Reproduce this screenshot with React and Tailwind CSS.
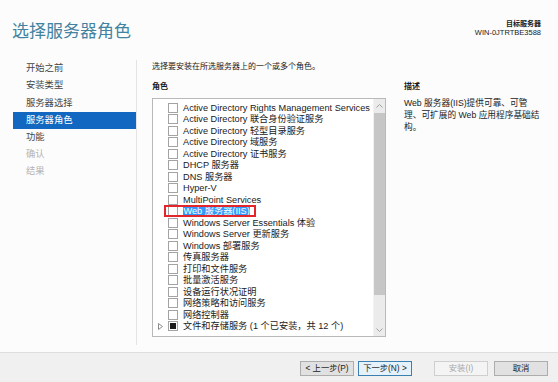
import React from 'react';

const navItems = [
    { label: '开始之前', state: 'done' },
    { label: '安装类型', state: 'done' },
    { label: '服务器选择', state: 'done' },
    { label: '服务器角色', state: 'active' },
    { label: '功能', state: 'done' },
    { label: '确认', state: 'disabled' },
    { label: '结果', state: 'disabled' },
];

const roles = [
    'Active Directory Rights Management Services',
    'Active Directory 联合身份验证服务',
    'Active Directory 轻型目录服务',
    'Active Directory 域服务',
    'Active Directory 证书服务',
    'DHCP 服务器',
    'DNS 服务器',
    'Hyper-V',
    'MultiPoint Services',
    'Web 服务器(IIS)',
    'Windows Server Essentials 体验',
    'Windows Server 更新服务',
    'Windows 部署服务',
    '传真服务器',
    '打印和文件服务',
    '批量激活服务',
    '设备运行状况证明',
    '网络策略和访问服务',
    '网络控制器',
    '文件和存储服务 (1 个已安装，共 12 个)',
];

const Checkbox = ({ partial }) => (
    <div className="w-[10px] h-[10px] border border-[#a3a3a3] bg-white flex items-center justify-center shrink-0">
        {partial && <div className="w-[6px] h-[6px] bg-[#1a1a1a]" />}
    </div>
);

const RoleRow = ({ label, index }) => {
    const isWeb = index === 9;
    const isLast = index === roles.length - 1;
    return (
        <div className="relative flex items-center h-[11.5px] whitespace-nowrap">
            <div className="w-[15px] flex justify-center shrink-0">
                {isLast && (
                    <svg width="5" height="7" viewBox="0 0 5 7">
                        <path d="M0.5 0.5 L4.5 3.5 L0.5 6.5 Z" fill="none" stroke="#8a8a8a" strokeWidth="1" />
                    </svg>
                )}
            </div>
            <Checkbox partial={isLast} />
            <span className={`ml-[5px] text-[9.2px] leading-[10px] ${isWeb ? 'bg-[#3399ff] text-white px-[0.5px]' : 'text-[#1a1a1a]'}`}>
                {label}
            </span>
            {isWeb && (
                <div className="absolute left-[11px] top-[-0.5px] w-[92px] h-[12.5px] border-2 border-[#e3262b]" />
            )}
        </div>
    );
};

const Button = ({ children, variant }) => {
    const styles = {
        normal: 'border-[#adadad] bg-[#e1e1e1] text-[#1a1a1a]',
        focus: 'border-[#3c7fb1] bg-[#e5f1fb] text-[#1a1a1a]',
        disabled: 'border-[#cfcfcf] bg-[#f4f4f4] text-[#a8a8a8]',
    };
    return (
        <button className={`w-[54px] h-[15px] border text-[8.3px] leading-[13px] flex items-center justify-center ${styles[variant]}`}>
            {children}
        </button>
    );
};

export default function App() {
    return (
        <div className="w-[558px] h-[382px] bg-[#fcfcfc] flex flex-col overflow-hidden font-['Liberation_Sans','Noto_Sans_CJK_SC',sans-serif]">
            {/* Header */}
            <div className="h-[58px] flex justify-between items-start shrink-0">
                <h1 className="pl-[12px] pt-[21px] text-[17px] leading-[22px] text-[#4183a0] font-normal">
                    选择服务器角色
                </h1>
                <div className="pr-[17px] pt-[19px] text-right text-[#1a1a1a]">
                    <div className="text-[7px] leading-[9.3px] font-bold">目标服务器</div>
                    <div className="text-[7.5px] leading-[9.3px]">WIN-0JTRTBE3588</div>
                </div>
            </div>

            {/* Body */}
            <div className="flex-1 flex min-h-0">
                <div className="w-[137px] shrink-0 mt-[2px] mb-[7px] border-r border-[#e3e3e3] pl-[12.7px] pt-[0.5px]">
                    {navItems.map((item) => (
                        <div
                            key={item.label}
                            className={`h-[17.2px] pl-[13.3px] flex items-center text-[9.3px] ${
                                item.state === 'active'
                                    ? 'bg-[#1268c0] text-white'
                                    : item.state === 'disabled'
                                        ? 'text-[#b4b4b4]'
                                        : 'text-[#454545]'
                            }`}
                        >
                            {item.label}
                        </div>
                    ))}
                </div>

                <div className="flex-1 pl-[15px] pt-[4.3px]">
                    <p className="text-[8px] leading-[10px] text-[#1a1a1a]">
                        选择要安装在所选服务器上的一个或多个角色。
                    </p>
                    <div className="flex mt-[10px]">
                        <div className="w-[234px] shrink-0">
                            <div className="text-[8px] leading-[10px] font-bold text-[#1a1a1a]">角色</div>
                            <div className="mt-[5.7px] h-[239px] border border-[#b9b9b9] bg-white flex">
                                <div className="flex-1 pt-[3px] overflow-hidden">
                                    {roles.map((r, i) => (
                                        <RoleRow key={r} label={r} index={i} />
                                    ))}
                                </div>
                                {/* Scrollbar */}
                                <div className="w-[12px] flex flex-col bg-[#ebebeb] border-l border-[#f2f2f2]">
                                    <div className="h-[14px] flex items-center justify-center">
                                        <svg width="7" height="4" viewBox="0 0 7 4">
                                            <path d="M0.5 3.5 L3.5 0.5 L6.5 3.5" fill="none" stroke="#a0a0a0" strokeWidth="1" />
                                        </svg>
                                    </div>
                                    <div className="h-[182px] bg-[#c6c6c6]" />
                                    <div className="flex-1" />
                                    <div className="h-[12px] flex items-center justify-center">
                                        <svg width="7" height="4" viewBox="0 0 7 4">
                                            <path d="M0.5 0.5 L3.5 3.5 L6.5 0.5" fill="none" stroke="#a0a0a0" strokeWidth="1" />
                                        </svg>
                                    </div>
                                </div>
                            </div>
                        </div>

                        <div className="ml-[18px] text-[#1a1a1a]">
                            <div className="text-[8px] leading-[10px] font-bold">描述</div>
                            <div className="mt-[6px] text-[8.7px] leading-[11.7px] whitespace-nowrap">
                                <div>Web 服务器(IIS)提供可靠、可管</div>
                                <div>理、可扩展的 Web 应用程序基础结</div>
                                <div>构。</div>
                            </div>
                        </div>
                    </div>
                </div>
            </div>

            {/* Footer */}
            <div className="h-[30px] shrink-0 border-t border-[#dedede] bg-[#f0f0f0] flex items-start justify-end pr-[10px] pt-[8px]">
                <Button variant="normal">&lt; 上一步(P)</Button>
                <div className="ml-[4px]"><Button variant="focus">下一步(N) &gt;</Button></div>
                <div className="ml-[22px]"><Button variant="disabled">安装(I)</Button></div>
                <div className="ml-[6px]"><Button variant="normal">取消</Button></div>
            </div>
        </div>
    );
}
